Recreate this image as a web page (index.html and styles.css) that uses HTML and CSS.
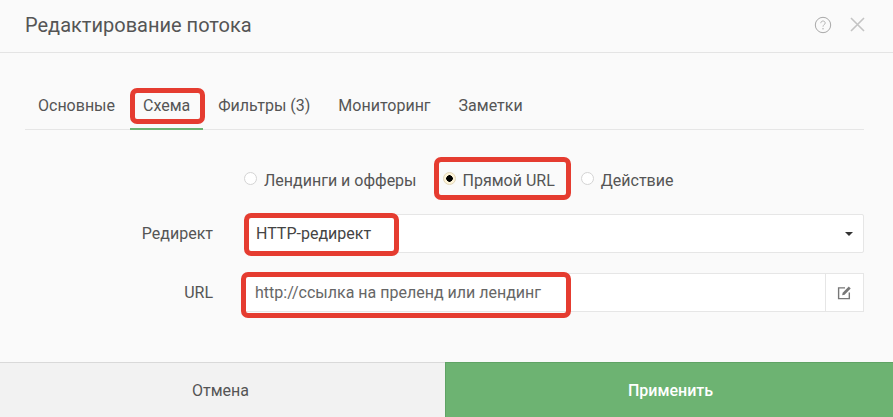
FILE: index.html
```html
<!DOCTYPE html>
<html lang="ru">
<head>
  <meta charset="UTF-8" />
  <title>Редактирование потока</title>
  <link rel="stylesheet" href="styles.css">
</head>
<body>
  <div class="modal">
    <!-- шапка -->
    <div class="modal-header">
      <h1>Редактирование потока</h1>
      <div class="header-icons">
        <svg class="icon-help" viewBox="0 0 18 18" width="18" height="18">
          <circle cx="9" cy="9" r="7.7" fill="none" stroke="#a8a8a8" stroke-width="1"/>
          <path d="M6.8 7.2C6.8 5.8 7.8 5 9 5s2.2.8 2.2 2c0 1.700-2.200 1.800-2.200 3.700" fill="none" stroke="#b5b5b5" stroke-width="1"/>
          <circle cx="9" cy="12.800" r=".8" fill="#b5b5b5"/>
        </svg>
        <svg class="icon-close" viewBox="0 0 15 15" width="15" height="15">
          <path d="M1 1l13 13M14 1L1 14" stroke="#c4c4c4" stroke-width="1.600" fill="none"/>
        </svg>
      </div>
    </div>

    <!-- вкладки -->
    <div class="modal-body">
      <ul class="tabs">
        <li>Основные</li>
        <li class="active">Схема<span class="mark mark-tab"></span></li>
        <li>Фильтры (3)</li>
        <li>Мониторинг</li>
        <li>Заметки</li>
      </ul>

      <div class="form-row radio-row">
        <label class="radio"><span class="dot"></span>Лендинги и офферы</label>
        <label class="radio checked"><span class="dot"></span>Прямой URL<span class="mark mark-direct"></span></label>
        <label class="radio"><span class="dot"></span>Действие</label>
      </div>

      <div class="form-row">
        <div class="form-label">Редирект</div>
        <div class="select">
          <span class="select-value">HTTP-редирект</span>
          <span class="caret"></span>
          <span class="mark mark-select"></span>
        </div>
      </div>

      <div class="form-row url-row">
        <div class="form-label">URL</div>
        <div class="input-group">
          <div class="input-text">http://ссылка на преленд или лендинг</div>
          <div class="addon">
            <svg viewBox="0 0 14 14" width="15" height="15">
              <path d="M7.500 2.700H1.500v10h10V7" fill="none" stroke="#777" stroke-width="1.300"/>
              <path d="M4.800 9.500l.5-2.300L11 1.500l1.800 1.800-5.700 5.700z" fill="#777"/>
            </svg>
          </div>
          <span class="mark mark-url"></span>
        </div>
      </div>
    </div>

    <!-- кнопки -->
    <div class="modal-footer">
      <button class="btn btn-cancel">Отмена</button>
      <button class="btn btn-apply">Применить</button>
    </div>
  </div>
</body>
</html>
```

FILE: styles.css
```css
* {
  box-sizing: border-box;
}

html, body {
  margin: 0;
  padding: 0;
  height: 100%;
}

body {
  font-family: Roboto, "Liberation Sans", sans-serif;
  font-size: 16px;
  color: #555;
  background: #fafafa;
  overflow: hidden;
}

.modal {
  display: flex;
  flex-direction: column;
  height: 417px;
}

/* шапка */
.modal-header {
  display: flex;
  justify-content: space-between;
  align-items: center;
  height: 53px;
  padding: 0 28px 3px 25px;
  border-bottom: 1px solid #e4e4e4;
}

.modal-header h1 {
  margin: 0;
  font-size: 20px;
  font-weight: 400;
  color: #555;
}

.header-icons {
  display: flex;
  align-items: center;
  gap: 18px;
}

.header-icons svg {
  display: block;
}

/* вкладки */
.modal-body {
  flex: 1;
  padding: 0 29px 0 25px;
}

.tabs {
  display: flex;
  list-style: none;
  margin: 34px 0 0;
  padding: 0;
  height: 43px;
  border-bottom: 1px solid #e6e6e6;
}

.tabs li {
  position: relative;
  height: 43px;
  padding: 9px 13px 0;
  line-height: 20px;
  white-space: nowrap;
  margin-right: 2px;
}

.tabs li.active {
  border-bottom: 2px solid #6cb373;
}

/* красные рамки поверх элементов */
.mark {
  position: absolute;
  border: 5px solid #e53c30;
  border-radius: 7px;
  pointer-events: none;
}

.mark-tab {
  left: 0;
  right: -2px;
  top: 1px;
  height: 36px;
}

.mark-direct {
  left: -9px;
  right: -16px;
  top: -13px;
  height: 43px;
}

.mark-select {
  left: -2px;
  width: 155px;
  top: -2px;
  height: 43px;
}

.mark-url {
  left: -5px;
  width: 330px;
  top: -2px;
  height: 46px;
}

/* форма */
.form-row {
  display: flex;
  align-items: center;
}

.radio-row {
  height: 22px;
  margin-top: 40px;
  padding-left: 219px;
  gap: 26px;
}

.radio {
  position: relative;
  display: flex;
  align-items: center;
  line-height: 22px;
  white-space: nowrap;
}

.dot {
  width: 13px;
  height: 13px;
  margin: -6px 7px 0 0;
  border: 1px solid #d4d4d4;
  border-radius: 50%;
  background: #fff;
}

.radio.checked .dot {
  border-color: #e2d6b8;
  background: radial-gradient(circle, #000 0 3px, #fdf3d8 3.500px);
}

.form-row + .form-row {
  margin-top: 20px;
}

.radio-row + .form-row {
  margin-top: 22px;
}

.form-label {
  width: 188px;
  text-align: right;
}

.select {
  position: relative;
  display: flex;
  align-items: center;
  justify-content: space-between;
  width: 619px;
  height: 39px;
  margin-left: 32px;
  padding: 0 10px 0 10px;
  background: #fff;
  border: 1px solid #e6e6e6;
  border-radius: 2px;
  color: #444;
}

.caret {
  width: 0;
  height: 0;
  border-left: 4px solid transparent;
  border-right: 4px solid transparent;
  border-top: 4px solid #333;
}

.input-group {
  position: relative;
  display: flex;
  width: 619px;
  height: 39px;
  margin-left: 32px;
  background: #fff;
  border: 1px solid #e6e6e6;
}

.input-text {
  flex: 1;
  padding: 0 9px;
  line-height: 37px;
  color: #666;
}

.addon {
  display: flex;
  align-items: center;
  justify-content: center;
  width: 38px;
  border-left: 1px solid #e6e6e6;
}

/* кнопки */
.modal-footer {
  display: flex;
  height: 55px;
}

.btn {
  font-family: inherit;
  font-size: 16px;
  border: 0;
  padding: 0;
}

.btn-cancel {
  width: 445px;
  padding-right: 4px;
  background: #f2f2f2;
  border-top: 1px solid #d9d9d9;
  color: #555;
}

.btn-apply {
  flex: 1;
  padding-left: 2px;
  background: #6db372;
  border-top: 1px solid #5fa365;
  border-left: 1px solid #5fa365;
  color: #fff;
  font-weight: 500;
}
```
